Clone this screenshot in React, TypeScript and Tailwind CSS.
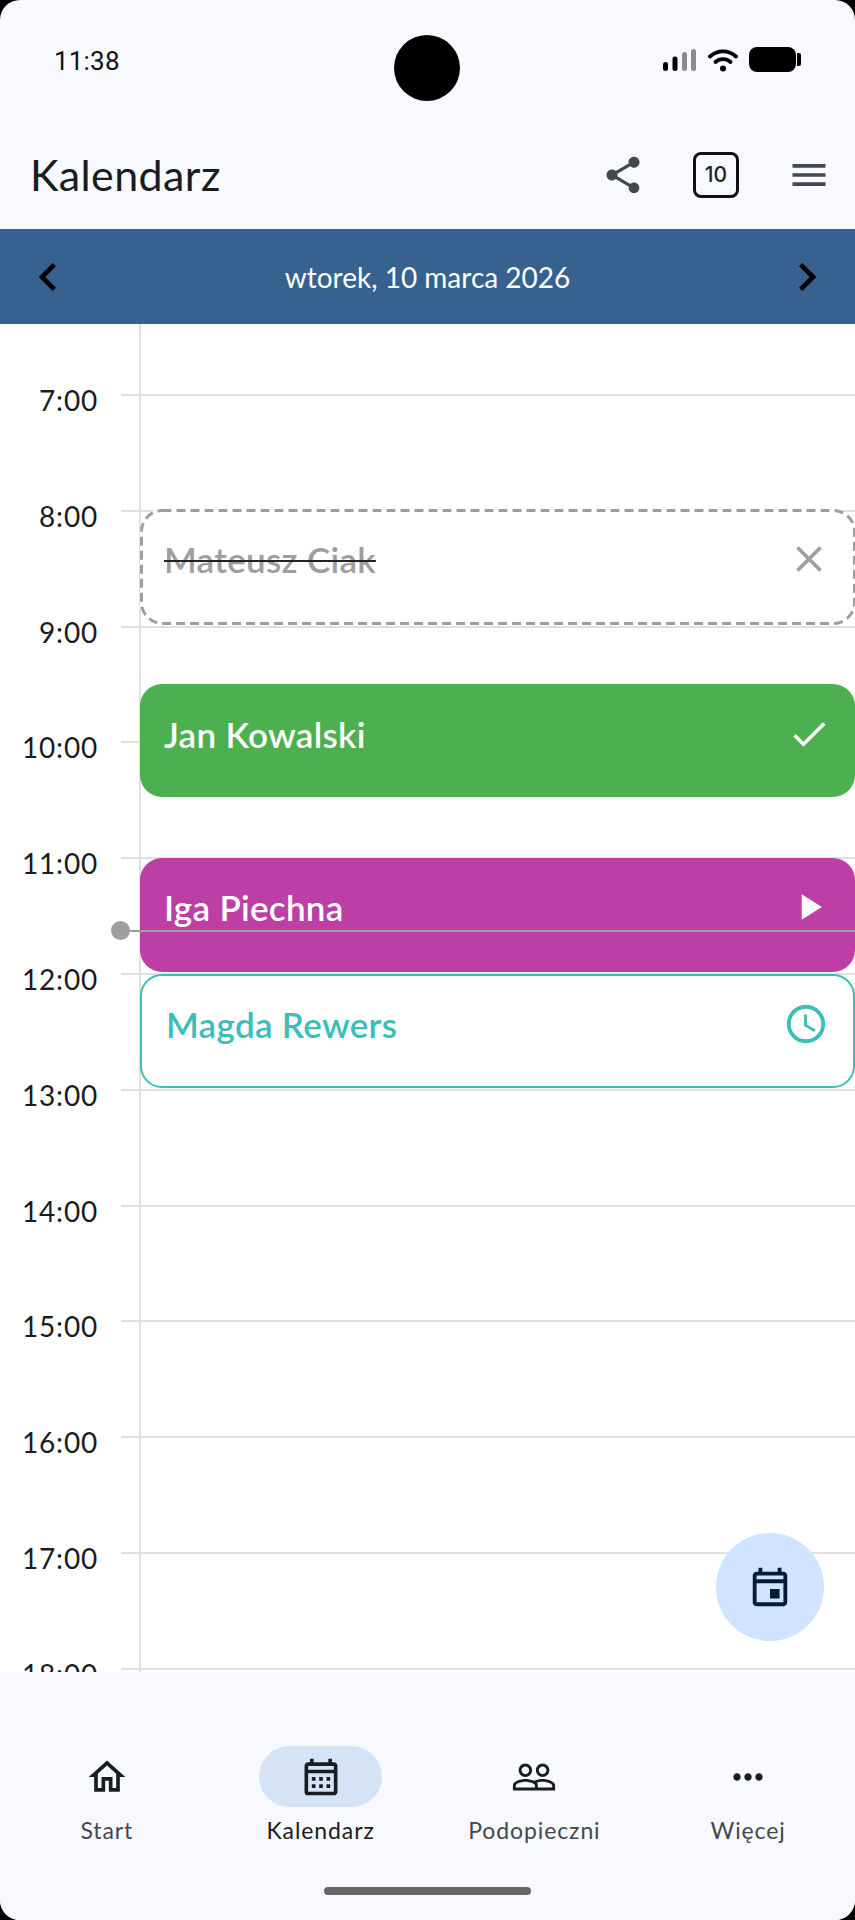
import {
  MdCheck,
  MdChevronLeft,
  MdChevronRight,
  MdClose,
  MdMenu,
  MdMoreHoriz,
  MdOutlineCalendarMonth,
  MdOutlineEvent,
  MdOutlineHome,
  MdOutlineSchedule,
  MdPeopleOutline,
  MdPlayArrow,
  MdShare,
} from "react-icons/md";

const HOURS = ["7:00", "8:00", "9:00", "10:00", "11:00", "12:00", "13:00", "14:00", "15:00", "16:00", "17:00", "18:00"];

function StatusIcons() {
  return (
    <div className="flex items-center">
      <svg width="34" height="24" viewBox="0 0 34 24" className="mr-[11px]">
        <rect x="0" y="14" width="5" height="9" rx="2.5" fill="#000" />
        <rect x="9.5" y="8.5" width="5" height="14.5" rx="2.5" fill="#000" />
        <rect x="19" y="4" width="5" height="19" rx="2.5" fill="#8a8a8a" />
        <rect x="28" y="1" width="5" height="22" rx="2.5" fill="#8a8a8a" />
      </svg>
      <svg width="30" height="24" viewBox="0 0 30 24" className="mr-[11px]">
        <path d="M2 8.5a19 19 0 0 1 26 0" fill="none" stroke="#000" strokeWidth="3.8" strokeLinecap="round" />
        <path d="M7.5 14a11 11 0 0 1 15 0" fill="none" stroke="#000" strokeWidth="3.8" strokeLinecap="round" />
        <circle cx="15" cy="20.5" r="3" fill="#000" />
      </svg>
      <div className="h-[25px] w-[47px] rounded-[8px] bg-black" />
      <div className="ml-px h-[13px] w-[4px] rounded-r-[2px] bg-black" />
    </div>
  );
}

function Event({
  name,
  className,
  nameClass,
  icon,
  children,
}: {
  name: string;
  className: string;
  nameClass?: string;
  icon: React.ReactNode;
  children?: React.ReactNode;
}) {
  return (
    <div className={`absolute left-[140px] right-0 flex items-center justify-between rounded-[22px] pl-[24px] pr-[24px] ${className}`}>
      {children}
      <span className={`text-[35px] font-semibold leading-[44px] tracking-[0.3px] ${nameClass ?? ""}`}>{name}</span>
      {icon}
    </div>
  );
}

function NavItem({
  label,
  icon,
  active,
}: {
  label: string;
  icon: React.ReactNode;
  active?: boolean;
}) {
  return (
    <div className="flex flex-col items-center">
      <div className={`flex h-[61px] w-[123px] items-center justify-center rounded-full ${active ? "bg-[#d6e3f7]" : ""}`}>
        {icon}
      </div>
      <span className={`mt-[8px] text-[23px] leading-[30px] tracking-[0.9px] ${active ? "text-[#191c20]" : "text-[#44474e]"}`}>
        {label}
      </span>
    </div>
  );
}

export default function App() {
  return (
    <div className="h-[1920px] w-[855px] overflow-hidden bg-black [font-family:Lato,sans-serif]">
      <div className="relative flex h-full flex-col overflow-hidden rounded-[20px] bg-[#f8f9ff]">
        {/* status bar + app bar */}
        <header className="h-[229px] shrink-0">
          <div className="relative flex h-[130px] items-start justify-between pl-[54px] pr-[54px] pt-[47px]">
            <span className="mt-px [font-family:Roboto,sans-serif] text-[26px] leading-[26px] tracking-[0.2px] text-[#111]">11:38</span>
            <div className="absolute left-[394px] top-[35px] h-[66px] w-[66px] rounded-full bg-black" />
            <StatusIcons />
          </div>
          <div className="flex h-[89px] items-center pl-[30px] pr-[24px]">
            <h1 className="flex-1 text-[43px] font-normal leading-[50px] tracking-[0.4px] text-[#191c20]">Kalendarz</h1>
            <MdShare size={44} color="#44474e" className="mr-[49px] translate-x-[1px]" />
            <div className="mr-[48px] flex h-[46px] w-[46px] items-center justify-center rounded-[8px] border-[3px] border-[#111] [font-family:Inter,sans-serif] text-[21px] font-medium text-[#222]">
              10
            </div>
            <MdMenu size={44} color="#44474e" />
          </div>
        </header>

        {/* date switcher */}
        <div className="flex h-[95px] shrink-0 items-center justify-between bg-[#37618e] pl-[20px] pr-[20px]">
          <MdChevronLeft size={56} color="#000" />
          <span className="text-[28px] leading-[36px] text-white">wtorek, 10 marca 2026</span>
          <MdChevronRight size={56} color="#000" />
        </div>

        {/* day timeline */}
        <main className="relative min-h-0 flex-1 overflow-hidden bg-white pt-[70px]">
          <div className="absolute bottom-0 left-[139px] top-0 w-[2px] bg-[#e0e0e0]" />
          {HOURS.map((hour) => (
            <div key={hour} className="flex h-[115.8px]">
              <div className="-mt-[12px] h-[36px] w-[121px] pr-[23px] text-right text-[28px] leading-[36px] tracking-[0.8px] text-[#191c20]">
                {hour}
              </div>
              <div className="h-[2px] flex-1 bg-[#e0e0e0]" />
            </div>
          ))}

          <Event
            name="Mateusz Ciak"
            className="top-[185px] h-[116px] bg-white pb-[16px]"
            nameClass="text-[#9e9e9e] line-through decoration-[#222] decoration-2"
            icon={<MdClose size={44} color="#9e9e9e" />}
          >
            <svg width="715" height="116" viewBox="0 0 715 116" className="absolute left-0 top-0">
              <rect x="1.5" y="1.5" width="713" height="113" rx="21" fill="none" stroke="#9e9e9e" strokeWidth="3" strokeDasharray="9 5" />
            </svg>
          </Event>
          <Event
            name="Jan Kowalski"
            className="top-[360px] h-[113px] bg-[#4caf50] pb-[14px]"
            nameClass="text-white"
            icon={<MdCheck size={44} color="#fff" />}
          />
          <Event
            name="Iga Piechna"
            className="top-[534px] h-[114px] bg-[#bd3ea5] pb-[17px]"
            nameClass="text-white"
            icon={<MdPlayArrow size={44} color="#fff" />}
          />
          <Event
            name="Magda Rewers"
            className="top-[650px] h-[114px] border-2 border-[#3dbdb8] bg-white pb-[14px]"
            nameClass="text-[#3dbdb8]"
            icon={<MdOutlineSchedule size={46} color="#3dbdb8" />}
          />

          {/* current time marker */}
          <div className="absolute left-[111px] right-0 top-[597px] flex items-center">
            <div className="h-[19px] w-[19px] shrink-0 rounded-full bg-[#9e9e9e]" />
            <div className="h-[2px] flex-1 bg-[#9e9e9e]" />
          </div>

          <button className="absolute left-[716px] top-[1209px] flex h-[108px] w-[108px] items-center justify-center rounded-full bg-[#d1e4ff]">
            <MdOutlineEvent size={46} color="#001d36" />
          </button>
        </main>

        {/* bottom navigation */}
        <nav className="flex h-[248px] shrink-0 flex-col bg-[#f8f9ff]">
          <div className="grid grid-cols-4 pt-[74px]">
            <NavItem label="Start" icon={<MdOutlineHome size={44} color="#191c20" />} />
            <NavItem label="Kalendarz" active icon={<MdOutlineCalendarMonth size={44} color="#191c20" />} />
            <NavItem label="Podopieczni" icon={<MdPeopleOutline size={46} color="#191c20" />} />
            <NavItem label="Więcej" icon={<MdMoreHoriz size={44} color="#191c20" />} />
          </div>
          <div className="mx-auto mt-[42px] h-[8px] w-[207px] rounded-full bg-[#666]" />
        </nav>
      </div>
    </div>
  );
}
